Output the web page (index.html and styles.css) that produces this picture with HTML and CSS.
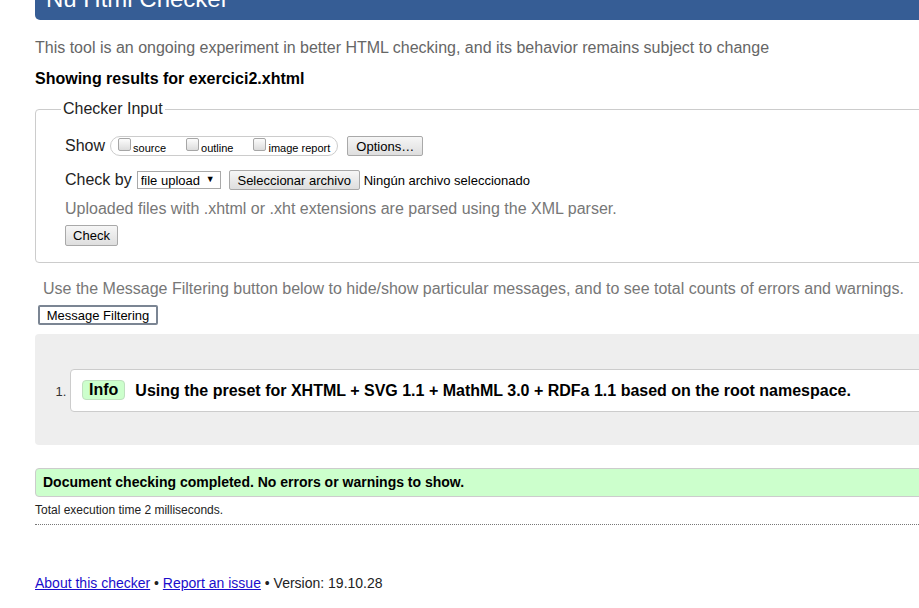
FILE: index.html
```html
<!DOCTYPE html>
<html lang="en">
<head>
<meta charset="utf-8">
<title>Nu Html Checker</title>
<link rel="stylesheet" href="styles.css">
</head>
<body>
<div class="page">
  <h1 class="title">Nu Html Checker</h1>
  <p class="intro">This tool is an ongoing experiment in better HTML checking, and its behavior remains subject to change</p>
  <p class="showing">Showing results for exercici2.xhtml</p>

  <fieldset class="checker">
    <legend>Checker Input</legend>
    <div class="row show-row">
      <span class="row-label">Show</span>
      <span class="pill">
        <label class="opt"><input type="checkbox" class="cb">source</label>
        <label class="opt"><input type="checkbox" class="cb">outline</label>
        <label class="opt"><input type="checkbox" class="cb">image report</label>
      </span>
      <button class="btn btn-options" type="button">Options…</button>
    </div>
    <div class="row by-row">
      <span class="row-label">Check by</span>
      <span class="select-wrap">
        <select class="select"><option>file upload</option></select>
      </span>
      <button class="btn btn-file" type="button">Seleccionar archivo</button>
      <span class="no-file">Ningún archivo seleccionado</span>
    </div>
    <p class="note">Uploaded files with .xhtml or .xht extensions are parsed using the XML parser.</p>
    <button class="btn btn-check" type="button">Check</button>
  </fieldset>

  <p class="filter-note">Use the Message Filtering button below to hide/show particular messages, and to see total counts of errors and warnings.</p>
  <button class="btn-filter" type="button">Message Filtering</button>

  <ol class="results">
    <li class="msg"><span class="badge">Info</span><span class="msg-text">Using the preset for XHTML + SVG 1.1 + MathML 3.0 + RDFa 1.1 based on the root namespace.</span></li>
  </ol>

  <p class="success">Document checking completed. No errors or warnings to show.</p>
  <p class="time">Total execution time 2 milliseconds.</p>
  <hr class="rule">

  <p class="footer"><a href="#">About this checker</a> • <a href="#">Report an issue</a> • Version: 19.10.28</p>
</div>
</body>
</html>
```

FILE: styles.css
```css
html {
  overflow: hidden;
}

body {
  margin: 0;
  font-family: "Liberation Sans", Arial, sans-serif;
  color: #000;
  background: #fff;
}

.page {
  padding-left: 35px;
  width: 1000px;
}

.title {
  margin: -15px 0 0;
  padding: 0 11px 8px;
  font-size: 24px;
  line-height: 27px;
  font-weight: normal;
  color: #fff;
  background: #365d95;
  border-bottom-left-radius: 5px;
}

.intro {
  margin: 19px 0 0;
  font-size: 16px;
  line-height: 18px;
  color: #666;
}

.showing {
  margin: 13px 0 0;
  font-size: 16px;
  line-height: 18px;
  font-weight: bold;
}

.checker {
  margin: 12px 0 0;
  border: 1px solid #ccc;
  border-radius: 4px;
  padding: 0 0 16px 29px;
}

.checker legend {
  margin-left: -4px;
  padding: 0 2px;
  font-size: 16px;
  line-height: 18px;
  color: #222;
}

.row {
  display: flex;
  align-items: center;
  height: 22px;
}

.show-row {
  margin-top: 17px;
}

.by-row {
  margin-top: 12px;
}

.row-label {
  font-size: 16px;
  color: #222;
}

.show-row .row-label {
  margin-right: 5px;
}

.by-row .row-label {
  margin-right: 5px;
}

.pill {
  display: flex;
  align-items: center;
  height: 18px;
  padding: 0 7px;
  border: 1px solid #ccc;
  border-radius: 10px;
}

.opt {
  display: flex;
  align-items: center;
  font-size: 11px;
  color: #000;
  margin-right: 20px;
  padding-top: 3px;
}

.opt:last-child {
  margin-right: 0;
}

.cb {
  appearance: none;
  -webkit-appearance: none;
  width: 13px;
  height: 13px;
  margin: -6px 2px 0 0;
  border: 1px solid #a6a6a6;
  border-radius: 2px;
  background: linear-gradient(#fcfcfc, #dcdcdc);
}

.btn {
  font-family: "Liberation Sans", Arial, sans-serif;
  font-size: 13px;
  line-height: 15px;
  color: #000;
  height: 20px;
  padding: 1px 8px 2px;
  border: 1px solid #a9a9a9;
  border-radius: 2px;
  background: linear-gradient(#f6f6f6, #dedede);
}

.btn-options {
  margin-left: 9px;
  width: 76px;
  padding: 0;
}

.select-wrap {
  position: relative;
  display: inline-block;
}

.select-wrap::after {
  content: "▼";
  position: absolute;
  right: 6px;
  top: 3px;
  font-size: 9px;
  color: #000;
  pointer-events: none;
}

.select {
  appearance: none;
  -webkit-appearance: none;
  width: 84px;
  height: 18px;
  padding: 0 0 0 3px;
  border: 1px solid #a9a9a9;
  border-radius: 0;
  background: #fff;
  font-family: "Liberation Sans", Arial, sans-serif;
  font-size: 13px;
  color: #000;
}

.btn-file {
  margin-left: 8px;
  width: 131px;
  padding: 0;
}

.no-file {
  margin-left: 4px;
  font-size: 13px;
}

.note {
  margin: 9px 0 0;
  font-size: 16px;
  line-height: 18px;
  color: #777;
}

.btn-check {
  display: block;
  margin-top: 7px;
  width: 53px;
  height: 21px;
  padding: 0;
}

.filter-note {
  margin: 17px 0 0 8px;
  font-size: 16px;
  line-height: 18px;
  color: #777;
}

.btn-filter {
  display: block;
  margin: 7px 0 0 3px;
  width: 120px;
  height: 20px;
  padding: 0;
  font-family: "Liberation Sans", Arial, sans-serif;
  font-size: 13px;
  color: #000;
  background: #fff;
  border: 2px solid #7b8593;
  border-radius: 2px;
}

.results {
  margin: 9px 0 0;
  padding: 35px 0 33px 35px;
  background: #eee;
  border-radius: 4px;
  list-style: decimal outside;
}

.msg {
  background: #fff;
  border: 1px solid #ccc;
  border-radius: 4px;
  padding: 10px 11px 9px;
  font-size: 16px;
  line-height: 22px;
  font-weight: bold;
}

.msg::marker {
  font-size: 13px;
  font-weight: normal;
  color: #333;
}

.badge {
  display: inline-block;
  line-height: 18px;
  padding: 0 6px;
  margin-right: 10px;
  background: #ccffcc;
  border: 1px solid #bfe0bf;
  border-radius: 4px;
  vertical-align: top;
}

.success {
  margin: 23px 0 0;
  padding: 5px 7px;
  font-size: 14px;
  line-height: 17px;
  font-weight: bold;
  background: #ccffcc;
  border: 1px solid #ccc;
  border-radius: 4px;
}

.time {
  margin: 6px 0 0;
  font-size: 12px;
  line-height: 14px;
  color: #222;
}

.rule {
  margin: 7px 0 0;
  border: 0;
  border-top: 1px dotted #777;
  height: 0;
}

.footer {
  margin: 50px 0 0;
  font-size: 14px;
  line-height: 16px;
  color: #222;
}

.footer a {
  color: #1a0dcc;
}
```
